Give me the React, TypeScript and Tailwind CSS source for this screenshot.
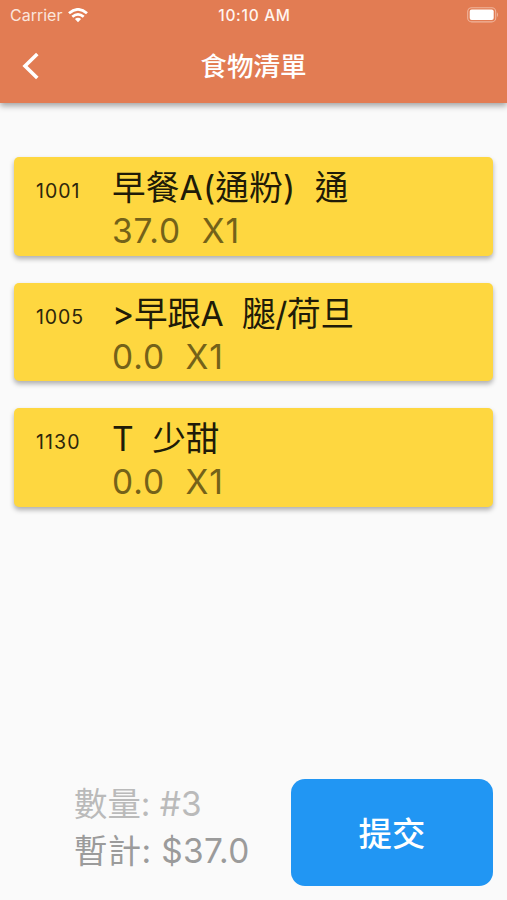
const items = [
  { code: "1001", name: "早餐A(通粉)  通", price: "37.0  X1", nameStyle: "tracking-[0.2px]", codeStyle: "tracking-[1px]" },
  { code: "1005", name: ">早跟A  腿/荷旦", price: "0.0  X1", nameStyle: "tracking-[-0.25px]", codeStyle: "tracking-[0.9px]" },
  { code: "1130", name: "T  少甜", price: "0.0  X1", nameStyle: "tracking-[-0.1px]", codeStyle: "tracking-[1.1px]" },
];

export default function App() {
  return (
    <div className="flex h-[900px] w-[507px] flex-col overflow-hidden bg-[#fafafa] font-[Inter,'Noto_Sans_CJK_TC',sans-serif]">
      <header className="h-[103px] shrink-0 bg-[#e27c53] text-white shadow-[0_3px_6px_rgba(0,0,0,0.35)]">
        <div className="grid h-[30px] grid-cols-3 items-center pr-[8px] pl-[10px]">
          <div className="flex items-center gap-[6px] text-[16px] text-[#fbe5dc]">
            <span>Carrier</span>
            <svg width="20" height="15" viewBox="0 0 20 15" fill="none" stroke="white" strokeWidth="2.8">
              <path d="M1 5.3Q10-2.5 19 5.3M4.3 8.8Q10 4 15.7 8.8" />
              <path d="M6.9 11Q10 8.6 13.1 11L10 14.3Z" fill="white" stroke="none" />
            </svg>
          </div>
          <div className="pt-px text-center text-[15.5px] font-medium tracking-[0.7px] whitespace-nowrap text-[#fff5f0]">10:10 AM</div>
          <div className="flex justify-end">
            <svg width="32" height="16" viewBox="0 0 32 16">
              <rect x="0.7" y="0.7" width="28" height="14.2" rx="4" fill="none" stroke="#f0b49c" strokeWidth="1.1" />
              <rect x="2.7" y="2.5" width="24" height="10.6" rx="2" fill="white" />
              <path d="M30 5.3Q32 7.8 30 10.3Z" fill="#f0b49c" />
            </svg>
          </div>
        </div>
        <div className="grid h-[71px] grid-cols-[60px_1fr_60px] items-center">
          <svg className="ml-[22px]" width="18" height="28" viewBox="0 0 18 28" fill="none" stroke="white" strokeWidth="3.6">
            <path d="M15.3 2L3 14L15.3 26" />
          </svg>
          <h1 className="text-center text-[26.6px] leading-[38px] font-medium">食物清單</h1>
        </div>
      </header>
      <main className="flex flex-1 flex-col gap-[27px] px-[14px] pt-[54px]">
        {items.map((item) => (
          <div key={item.code} className="flex h-[98.5px] rounded-[5px] bg-[#fed740] pl-[22px] shadow-[0_3px_5px_rgba(0,0,0,0.3)]">
            <span className={`w-[76px] pt-[19px] text-[19.5px] leading-[30px] text-[#2d260b] ${item.codeStyle}`}>{item.code}</span>
            <div className="pt-[9px] whitespace-pre">
              <div className={`text-[33.6px] leading-[43px] font-[390] text-[#201b08] ${item.nameStyle}`}>{item.name}</div>
              <div className="pt-px text-[33.5px] leading-[43px] font-[390] tracking-[0.9px] text-[#746219]">{item.price}</div>
            </div>
          </div>
        ))}
      </main>
      <footer className="flex h-[122px] shrink-0 pr-[14px] pl-[74px]">
        <div className="w-[217px] pt-[3px] text-[33.4px] leading-[47px] font-[390] whitespace-nowrap">
          <div className="text-[#bababa]">數量: #3</div>
          <div className="tracking-[0.35px] text-[#9b9b9b]">暫計: $37.0</div>
        </div>
        <button className="mt-px h-[107px] w-[202px] rounded-[14px] bg-[#2196f3] pt-[4px] text-[33.4px] font-medium text-white">提交</button>
      </footer>
    </div>
  );
}
